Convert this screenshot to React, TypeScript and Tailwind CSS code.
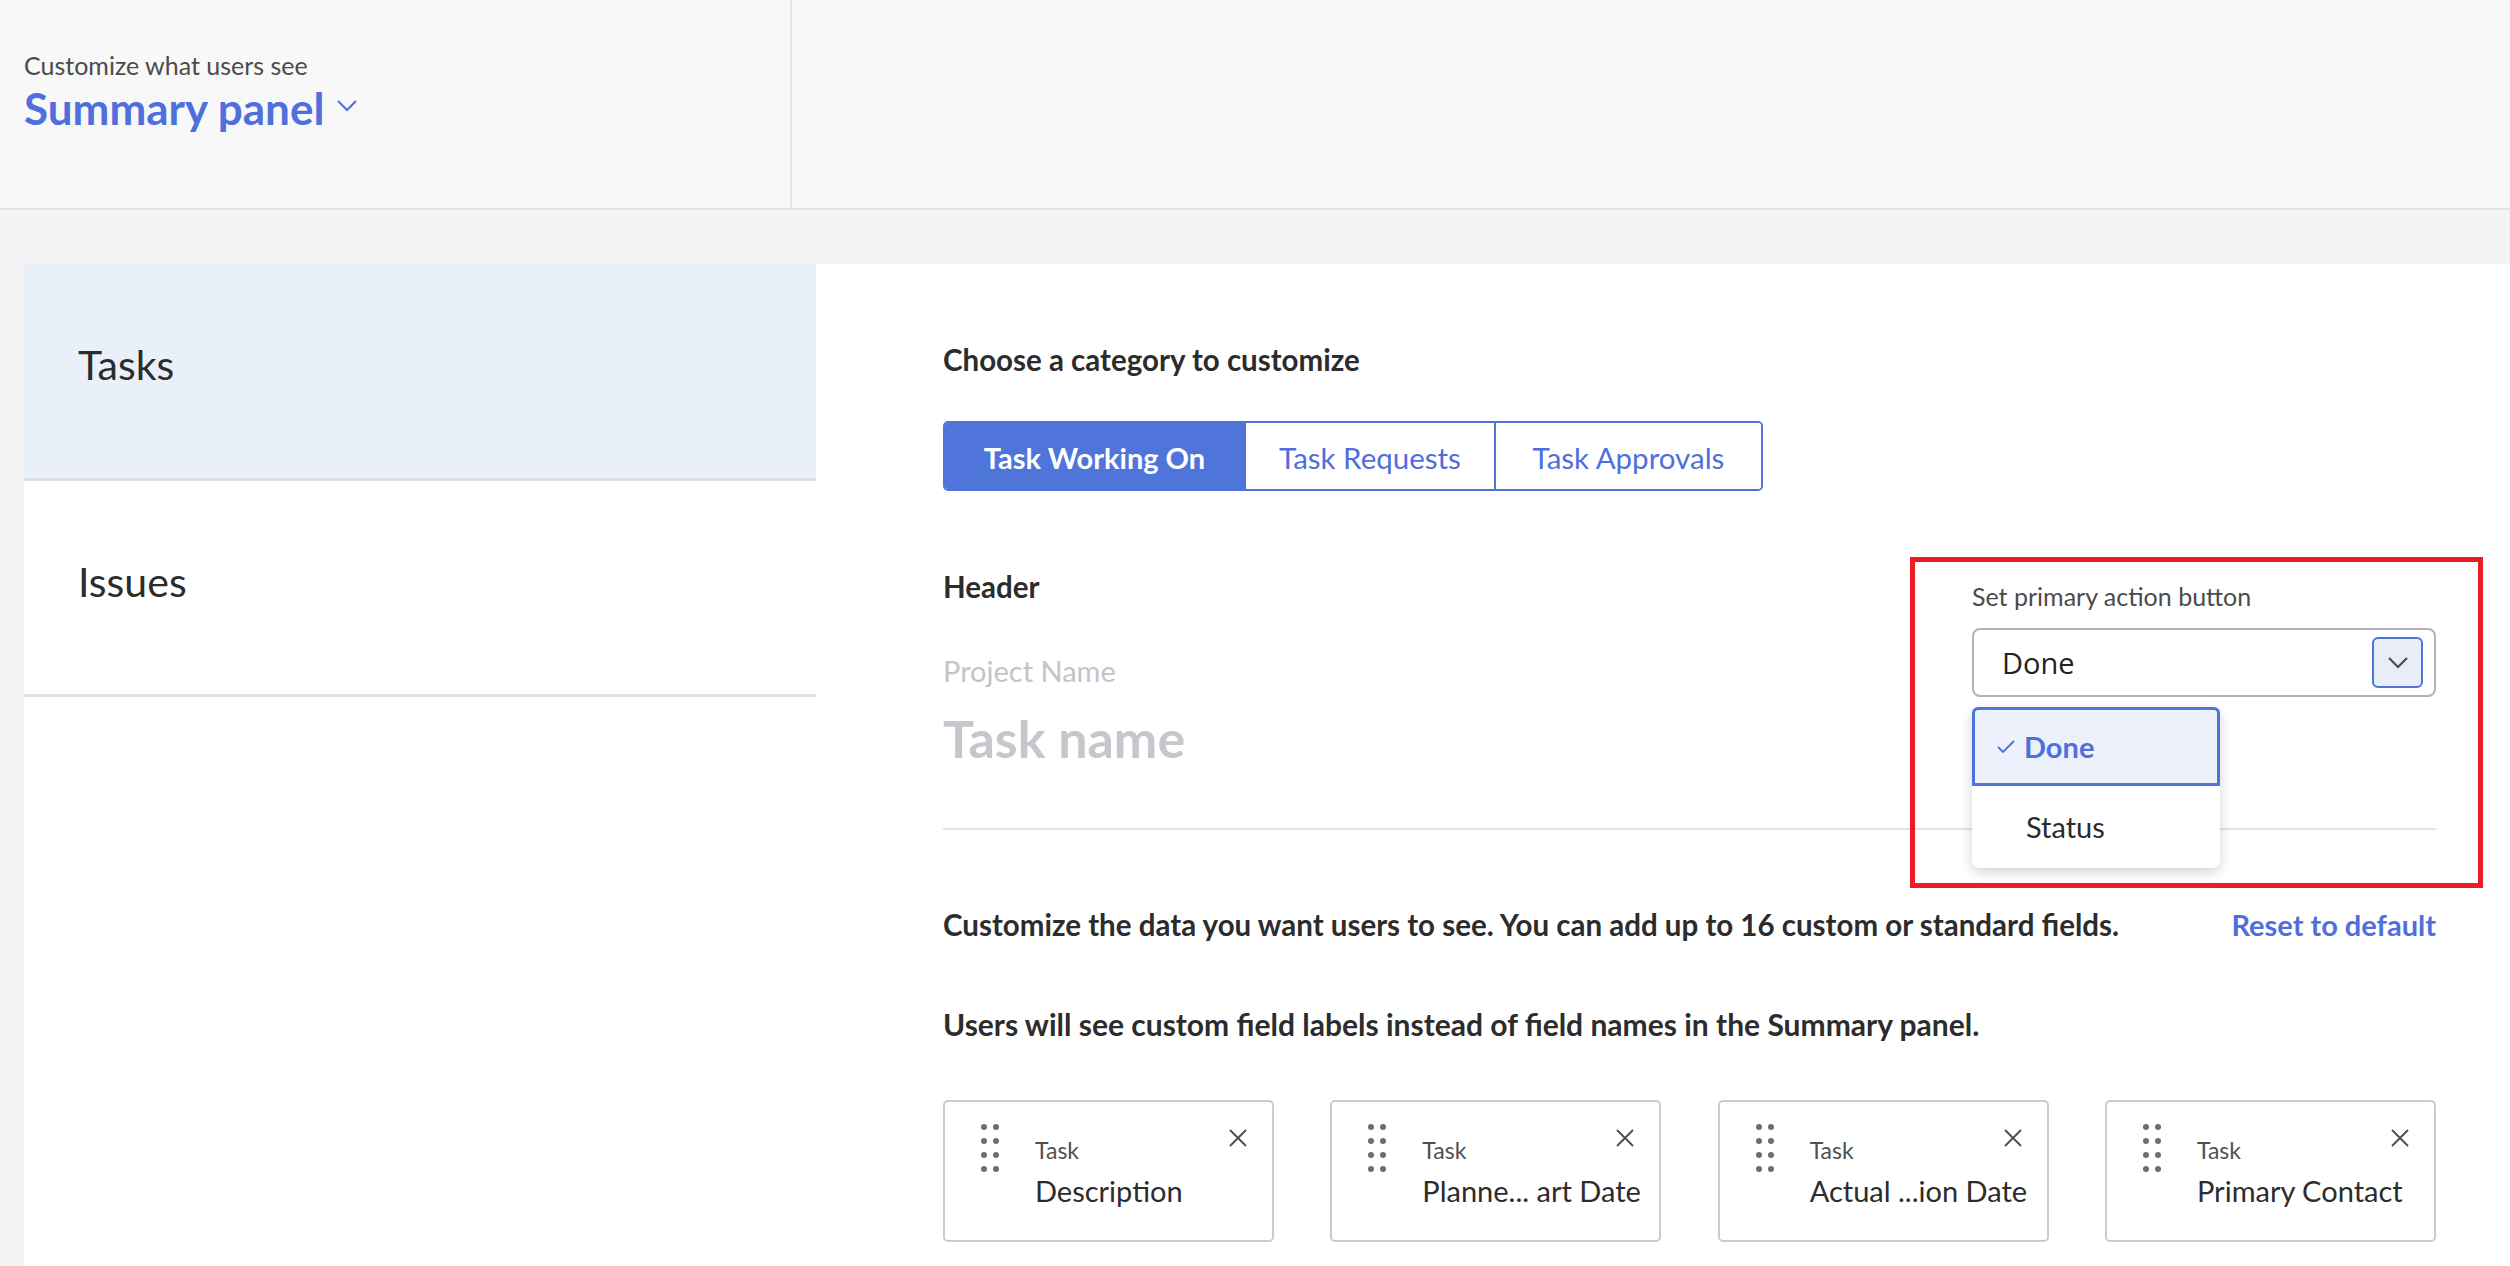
import { useState } from "react";

const fields = [
  { group: "Task", name: "Description" },
  { group: "Task", name: "Planne... art Date" },
  { group: "Task", name: "Actual ...ion Date" },
  { group: "Task", name: "Primary Contact" },
];

const tabs = [
  { label: "Task Working On", w: "w-[299px]" },
  { label: "Task Requests", w: "w-[250px]" },
  { label: "Task Approvals", w: "w-[267px]" },
];

function Grip() {
  return (
    <svg width="20" height="50" viewBox="0 0 20 50" className="shrink-0">
      {[3, 17, 31, 45].map((y) => (
        <g key={y} fill="#6e6e6e">
          <circle cx="4" cy={y} r="3" />
          <circle cx="16" cy={y} r="3" />
        </g>
      ))}
    </svg>
  );
}

function CloseIcon() {
  return (
    <svg width="20" height="20" viewBox="0 0 20 20" className="shrink-0">
      <path d="M2 2 L18 18 M18 2 L2 18" stroke="#4b4b4b" strokeWidth="1.8" fill="none" />
    </svg>
  );
}

function FieldCard({ group, name }: { group: string; name: string }) {
  return (
    <div className="w-[331px] h-[142px] border-2 border-[#cbcbcb] rounded-[5px] bg-white flex pl-[35px] pr-[24px] pt-[22px]">
      <Grip />
      <div className="ml-[35px] pt-[12px] flex flex-col flex-1 min-w-0">
        <span className="text-[23px] leading-[28px] text-[#505050]">{group}</span>
        <span className="mt-[10px] text-[29px] leading-[34px] text-[#2c2c2c] whitespace-nowrap">{name}</span>
      </div>
      <div className="shrink-0 pt-[4px]">
        <CloseIcon />
      </div>
    </div>
  );
}

export default function App() {
  const [active, setActive] = useState(0);
  const [open] = useState(true);

  return (
    <div className="min-h-screen w-[2510px] bg-[#f4f4f4] font-['Lato',sans-serif] text-[#2c2c2c]">
      <header className="h-[210px] flex bg-[#f8f8f8] border-b-2 border-[#e2e2e2]">
        <div className="w-[792px] border-r-2 border-[#e6e6e6] pl-6 pt-[50px]">
          <div className="text-[25px] leading-[30px] text-[#4b4b4b]">Customize what users see</div>
          <div className="flex items-center gap-[12px] mt-[2px]">
            <span className="text-[44px] leading-[52px] font-bold text-[#4f6fdc]">Summary panel</span>
            <svg width="22" height="14" viewBox="0 0 22 14" className="-mt-[4px]">
              <path d="M2 2 L11 11 L20 2" stroke="#4f6fdc" strokeWidth="2" fill="none" />
            </svg>
          </div>
        </div>
      </header>

      <div className="flex pt-[54px] pl-6">
        <aside className="w-[792px] min-h-[1002px] bg-white flex flex-col">
          <div className="h-[217px] bg-[#e9f0f9] border-b-[3px] border-[#dcdfe4] pl-[54px] flex items-center pb-[12px]">
            <span className="text-[41px] text-[#2c2c2c]">Tasks</span>
          </div>
          <div className="h-[216px] bg-white border-b-[3px] border-[#dcdfe4] pl-[54px] flex items-center pb-[12px]">
            <span className="text-[41px] text-[#2c2c2c]">Issues</span>
          </div>
        </aside>

        <main className="flex-1 bg-white pl-[127px] relative">
          <div className="w-[1493px] pt-[76px]">
            <h2 className="text-[29.5px] leading-[40px] font-bold text-[#2c2c2c]">Choose a category to customize</h2>

            <div className="mt-[41px] flex w-fit border-2 border-[#4f74da] rounded-[5px] overflow-hidden">
              {tabs.map((t, i) => (
                <button
                  key={t.label}
                  onClick={() => setActive(i)}
                  className={`${t.w} h-[66px] pt-[4px] ${i > 0 ? "border-l-2 border-[#4f74da]" : ""} ${
                    active === i ? "bg-[#4f74da] text-white font-bold text-[29px]" : "bg-white text-[#4f6fdc] text-[29.5px]"
                  }`}
                >
                  {t.label}
                </button>
              ))}
            </div>

            <div className="mt-[76px] flex justify-between">
              <div className="flex flex-col">
                <span className="text-[29.5px] leading-[40px] font-bold">Header</span>
                <span className="mt-[46px] text-[29px] leading-[36px] text-[#c3c4c9]">Project Name</span>
                <span className="mt-[19px] text-[52px] leading-[60px] font-bold text-[#c6c7cc]">Task name</span>
              </div>

              <div className="w-[464px] pt-[13px]">
                <div className="text-[25px] leading-[32px] text-[#4b4b4b]">Set primary action button</div>
                <div className="relative mt-[16px]">
                  <div className="h-[69px] border-2 border-[#b3b3b3] rounded-[8px] flex items-center pl-[28px] pr-[11px]">
                    <span className="text-[29px] text-[#222] font-['Open_Sans',sans-serif]">Done</span>
                    <div className="ml-auto w-[51px] h-[51px] rounded-[6px] border-2 border-[#4f74da] bg-[#e9edf8] flex items-center justify-center">
                      <svg width="22" height="13" viewBox="0 0 22 13">
                        <path d="M2 2 L11 11 L20 2" stroke="#4b4b4b" strokeWidth="2.2" fill="none" />
                      </svg>
                    </div>
                  </div>
                  {open && (
                    <div className="absolute left-0 top-full mt-[10px] w-[248px] bg-white rounded-[8px] shadow-[0_4px_12px_rgba(0,0,0,0.18)] z-10">
                      <div className="h-[79px] border-[3px] border-[#4f74da] bg-[#edf1fb] rounded-t-[6px] flex items-center pl-[22px]">
                        <svg width="18" height="14" viewBox="0 0 18 14" className="mr-[9px]">
                          <path d="M1 7 L6 12 L17 1" stroke="#4f6fdc" strokeWidth="1.8" fill="none" />
                        </svg>
                        <span className="text-[29px] font-bold text-[#4f6fdc]">Done</span>
                      </div>
                      <div className="h-[82px] flex items-center pl-[54px]">
                        <span className="text-[29px] text-[#2c2c2c]">Status</span>
                      </div>
                    </div>
                  )}
                </div>
              </div>
            </div>

            <div className="mt-[60px] h-[2px] bg-[#e3e3e3]" />

            <div className="mt-[75px] flex items-center justify-between">
              <span className="text-[29.5px] leading-[40px] font-bold">
                Customize the data you want users to see. You can add up to 16 custom or standard fields.
              </span>
              <a className="text-[29px] leading-[40px] font-bold text-[#4f6fdc]">Reset to default</a>
            </div>

            <div className="mt-[59px] text-[30px] leading-[40px] font-bold">
              Users will see custom field labels instead of field names in the Summary panel.
            </div>

            <div className="mt-[56px] flex justify-between">
              {fields.map((f) => (
                <FieldCard key={f.name} group={f.group} name={f.name} />
              ))}
            </div>
          </div>

          <div className="absolute left-[1094px] top-[293px] w-[573px] h-[331px] border-[5px] border-[#ec1c24] pointer-events-none z-20" />
        </main>
      </div>
    </div>
  );
}
